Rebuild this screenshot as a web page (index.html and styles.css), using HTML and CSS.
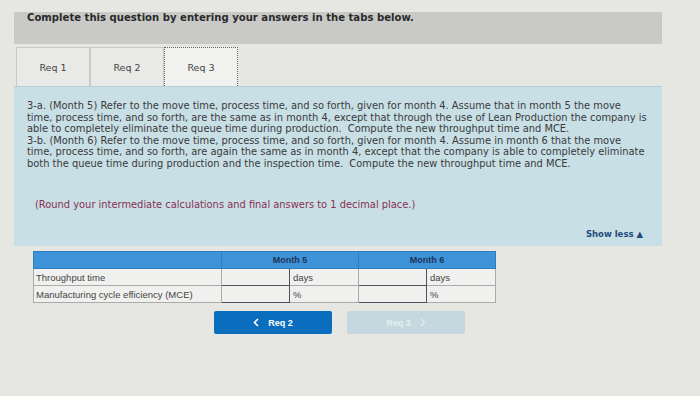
FILE: index.html
```html
<!DOCTYPE html>
<html lang="en">
  <head>
    <meta charset="UTF-8" />
    <title>Req 3</title>
    <link rel="stylesheet" href="styles.css">
  </head>
  <body>
    <div class="instructions">Complete this question by entering your answers in the tabs below.</div>

    <div class="tabs">
      <div class="tab">Req 1</div>
      <div class="tab">Req 2</div>
      <div class="tab active">Req 3</div>
    </div>

    <div class="question">
      <p class="prompt">
        3-a. (Month 5) Refer to the move time, process time, and so forth, given for month 4. Assume that in month 5 the move<br>
        time, process time, and so forth, are the same as in month 4, except that through the use of Lean Production the company is<br>
        able to completely eliminate the queue time during production.&nbsp; Compute the new throughput time and MCE.<br>
        3-b. (Month 6) Refer to the move time, process time, and so forth, given for month 4. Assume in month 6 that the move<br>
        time, process time, and so forth, are again the same as in month 4, except that the company is able to completely eliminate<br>
        both the queue time during production and the inspection time.&nbsp; Compute the new throughput time and MCE.
      </p>
      <p class="round">(Round your intermediate calculations and final answers to 1 decimal place.)</p>
      <div class="show-less">Show less &#9650;</div>
    </div>

    <table class="answers">
      <tr class="head">
        <th class="label-col"></th>
        <th colspan="2">Month 5</th>
        <th colspan="2">Month 6</th>
      </tr>
      <tr>
        <td class="label">Throughput time</td>
        <td class="entry"><input type="text"></td>
        <td class="unit">days</td>
        <td class="entry"><input type="text"></td>
        <td class="unit">days</td>
      </tr>
      <tr>
        <td class="label">Manufacturing cycle efficiency (MCE)</td>
        <td class="entry"><input type="text"></td>
        <td class="unit">%</td>
        <td class="entry"><input type="text"></td>
        <td class="unit">%</td>
      </tr>
    </table>

    <div class="nav">
      <button class="prev">
        <svg width="6" height="9" viewBox="0 0 6 9"><path d="M5 1 L1.5 4.5 L5 8" fill="none" stroke="#fff" stroke-width="1.6"/></svg>
        Req 2
      </button>
      <button class="next" disabled>
        Req 3
        <svg width="6" height="9" viewBox="0 0 6 9"><path d="M1 1 L4.5 4.5 L1 8" fill="none" stroke="#e4eef2" stroke-width="1.2"/></svg>
      </button>
    </div>
  </body>
</html>
```

FILE: styles.css
```css
body {
  margin: 0;
  padding: 12px 38px 0 14px;
  background-color: #e6e7e3;
  font-family: "DejaVu Sans", Verdana, sans-serif;
  color: #333;
}

.instructions {
  background: #c9cac8;
  height: 32px;
  padding: 0 13px;
  font-size: 10.1px;
  font-weight: bold;
  color: #2a2a2a;
  line-height: 11px;
}

.tabs {
  display: flex;
  margin-top: 3px;
  padding-left: 2px;
}

.tab {
  width: 74px;
  height: 39px;
  line-height: 40px;
  text-align: center;
  font-size: 9.5px;
  color: #444;
  background: #e9e9e7;
  border: 1px solid #c9c9c7;
  border-bottom: none;
  box-sizing: border-box;
}

.tab.active {
  background: #f1f1ef;
  border: 1px dotted #666;
  border-bottom: none;
}

.question {
  background: #c8dfe6;
  height: 160px;
  padding: 13px 10px 0 13px;
  box-sizing: border-box;
  border-top: 1px solid #b8ccd4;
}

.prompt {
  margin: 0;
  font-size: 9.9px;
  line-height: 11.5px;
  color: #3a3a3a;
  white-space: nowrap;
}

.round {
  margin: 30px 0 0 8px;
  font-size: 9.9px;
  color: #8a2f52;
}

.show-less {
  text-align: right;
  margin-top: 19px;
  padding-right: 9px;
  font-size: 8.5px;
  font-weight: bold;
  color: #1f4b78;
}

.answers {
  margin: 5px 0 0 19px;
  border-collapse: collapse;
  font-family: "Liberation Sans", Arial, sans-serif;
  font-size: 9.5px;
  color: #444;
}

.answers th {
  background: #3d92d8;
  color: #1d3557;
  height: 16px;
  padding: 0;
  font-size: 9px;
  border: 1px solid #2e7cc0;
}

.answers .label-col {
  width: 187px;
}

.answers td {
  height: 16px;
  padding: 0 3px;
  background: #f0f0ee;
  border: 1px solid #aaa;
}

.answers .label {
  padding-left: 2px;
}

.answers .entry {
  width: 67px;
  padding: 0;
  border: 1px solid #4a5360;
}

.entry input {
  width: 100%;
  height: 15px;
  border: none;
  background: transparent;
  box-sizing: border-box;
}

.answers .unit {
  width: 62px;
}

.nav {
  display: flex;
  gap: 15px;
  margin: 8px 0 0 200px;
}

.nav button {
  display: flex;
  align-items: center;
  justify-content: center;
  gap: 9px;
  width: 118px;
  height: 23px;
  border: none;
  border-radius: 2px;
  font-family: "Liberation Sans", Arial, sans-serif;
  font-size: 9px;
  font-weight: bold;
}

.prev {
  background: #0b6dbd;
  color: #fff;
}

.next {
  background: #c6d8df;
  color: #e4eef2;
}
```
